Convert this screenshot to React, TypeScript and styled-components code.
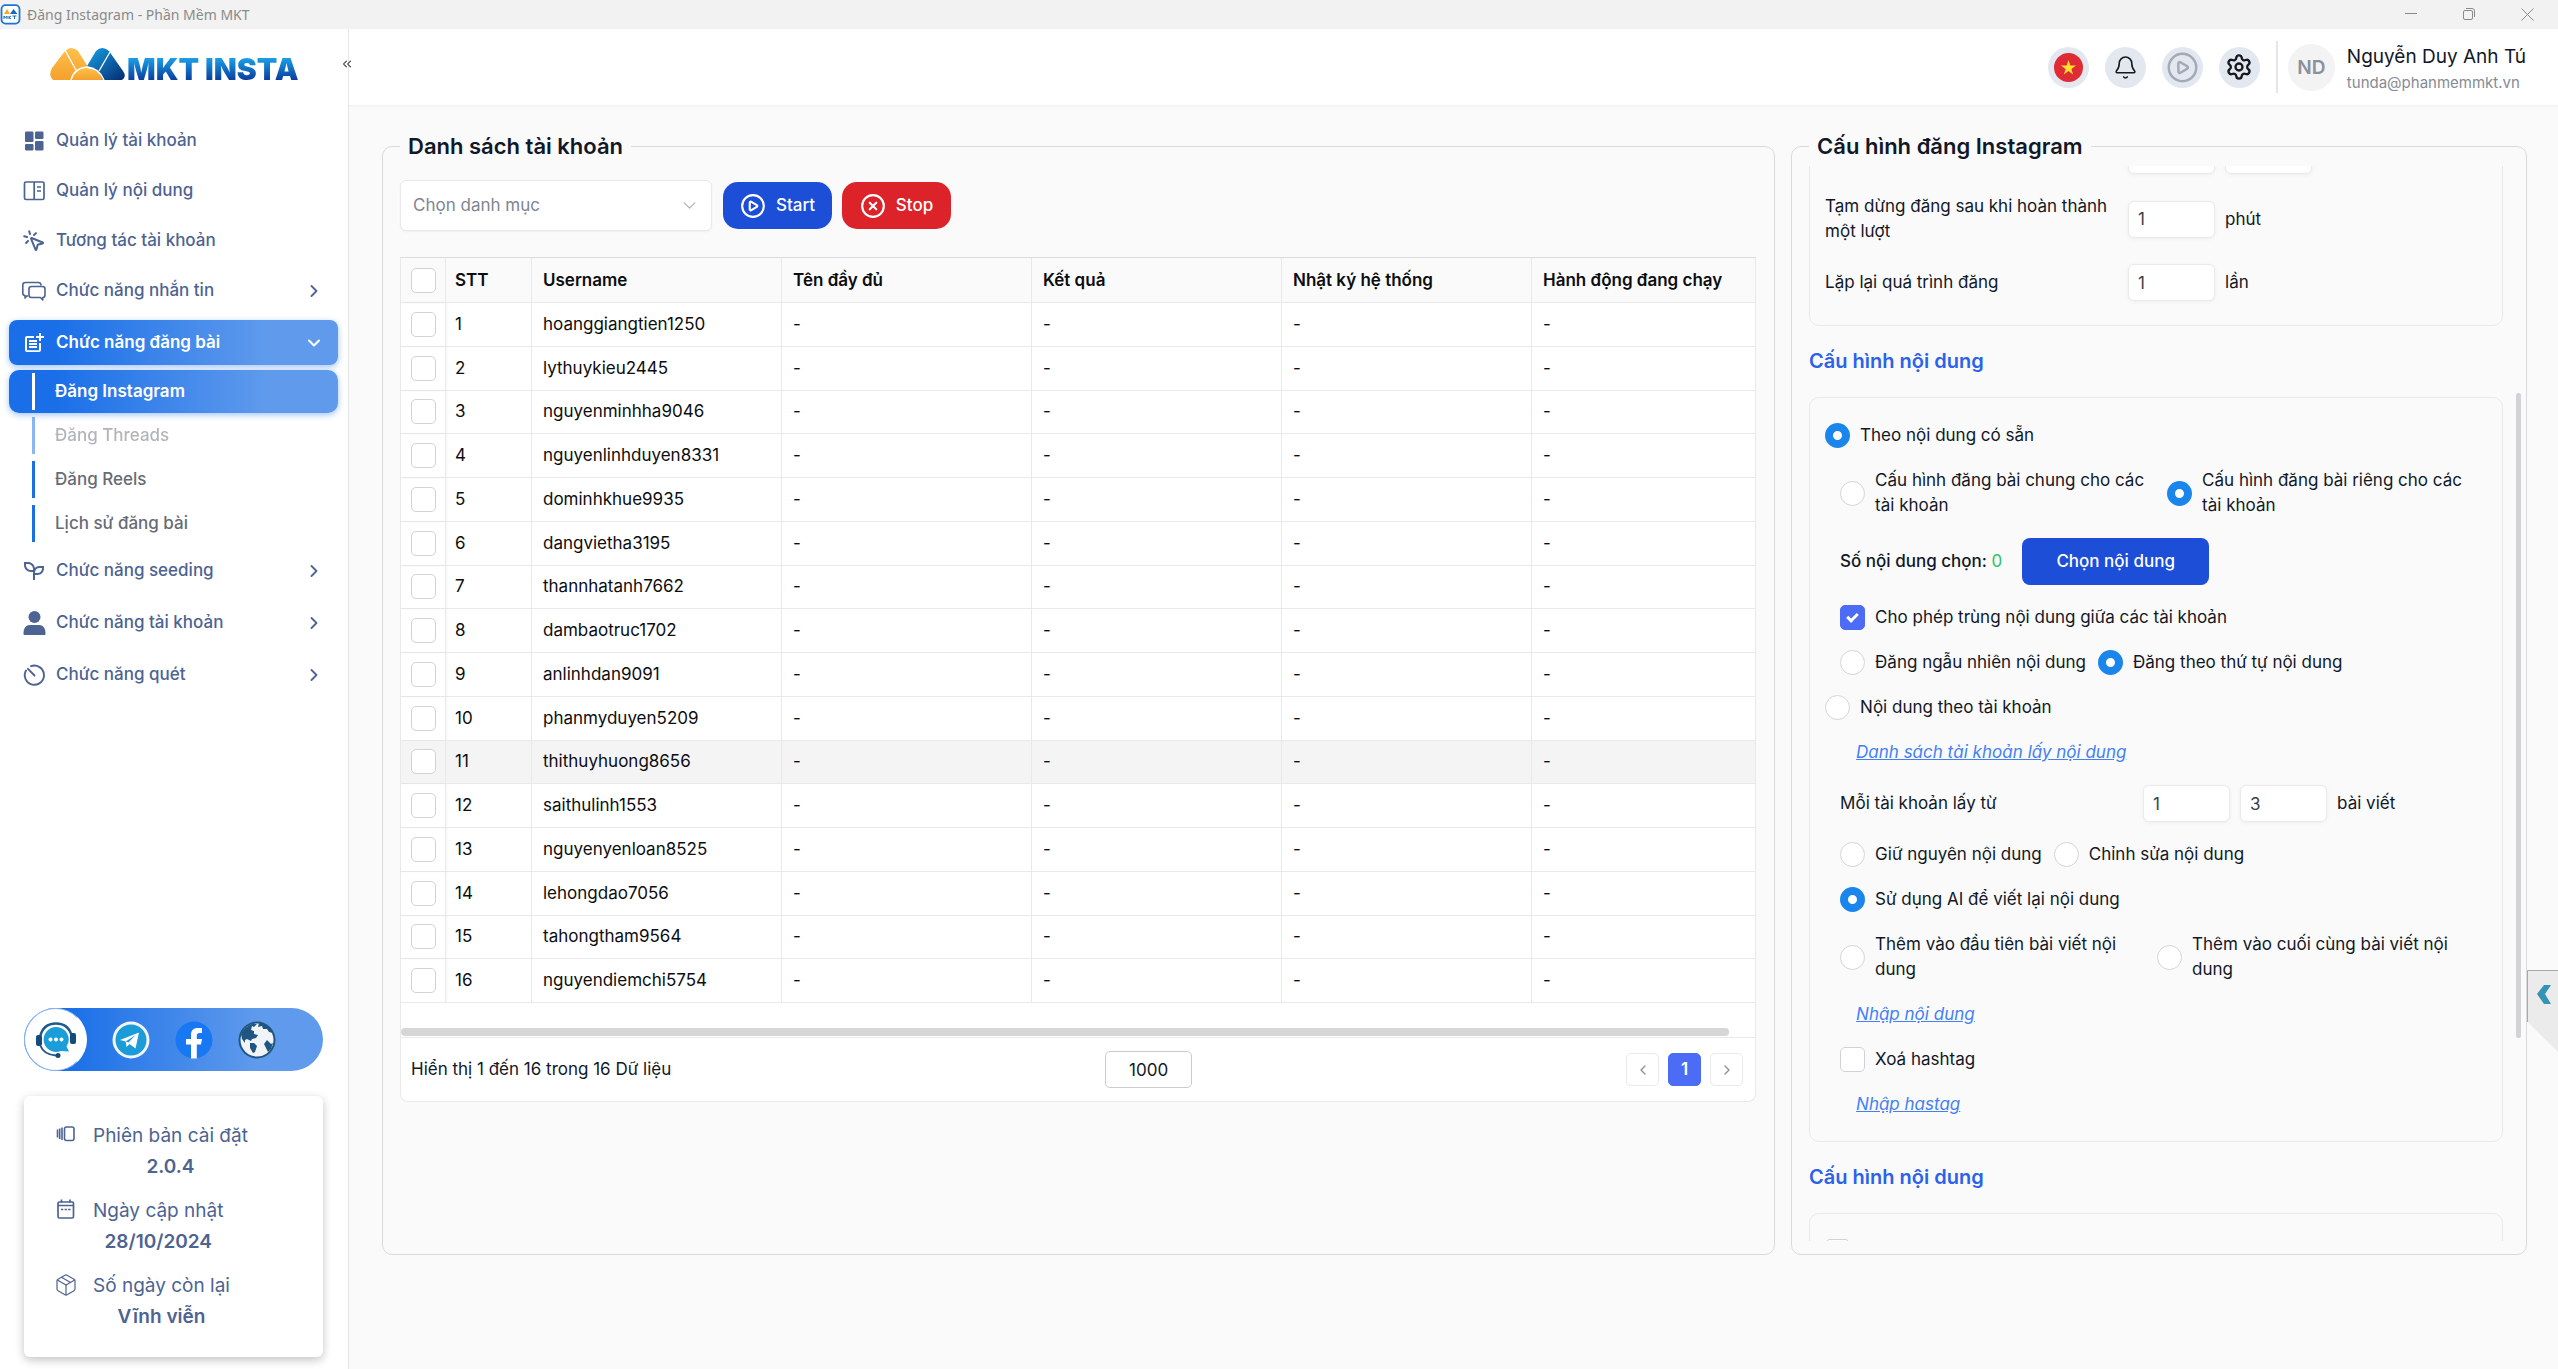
import React, { useLayoutEffect, useRef } from "react";
import styled, { createGlobalStyle, css } from "styled-components";
import {
  Bell,
  ChevronDown,
  ChevronLeft,
  ChevronRight,
  ChevronsLeft,
  CirclePlay,
  CircleX,
  MousePointerClick,
  Package,
  Settings,
} from "lucide-react";
import { MdOutlinePostAdd } from "react-icons/md";
import { RiSeedlingLine } from "react-icons/ri";

const line = "#d9dadc";
const softLine = "#e9e9ec";
const slate = "#4d6391";
const blueFade = "linear-gradient(90deg, #1a6fe8 0%, #1a6fe8 14%, #5f9aec 78%, #5f9aec 100%)";

const GlobalStyle = createGlobalStyle`
  *, *::before, *::after { box-sizing: border-box; }
  body {
    margin: 0;
    background: #fafafa;
    color: #111827;
    font: 400 17px/25px Inter, "Noto Sans", sans-serif;
  }
  button, input, select { font: inherit; color: inherit; }
  button { cursor: pointer; border: 0; padding: 0; background: none; }
`;

/* ---------- window frame ---------- */

const Window = styled.div`
  display: flex;
  flex-direction: column;
  height: 100vh;
  overflow: hidden;
`;

const TitleBar = styled.div`
  display: flex;
  align-items: center;
  flex: none;
  gap: 6px;
  height: 29px;
  padding-right: 19px;
  background: #f2f2f2;
  color: #8a8a8a;
  font: 400 14px/20px "Noto Sans", "Open Sans", sans-serif;
`;

const WindowButtons = styled.div`
  display: flex;
  gap: 34px;
  margin-left: auto;
  button {
    display: flex;
    width: 24px;
    justify-content: center;
  }
`;

const Body = styled.div`
  position: relative;
  display: flex;
  flex: 1;
  min-height: 0;
`;

/* ---------- sidebar ---------- */

const Sidebar = styled.aside`
  display: flex;
  flex-direction: column;
  flex: none;
  width: 349px;
  padding-bottom: 12px;
  background: #fff;
  border-right: 1px solid #e5e6e8;
`;

const Brand = styled.div`
  position: relative;
  display: flex;
  align-items: flex-end;
  gap: 2px;
  height: 89px;
  padding: 18px 0 37px 50px;
`;

const BrandName = styled.span`
  font: 900 30px/24px Inter, sans-serif;
  white-space: nowrap;
  background: linear-gradient(#1b9fe6 5%, #0b3f9f 95%);
  background-clip: text;
  color: transparent;
`;

const Collapse = styled.button`
  position: absolute;
  right: -6px;
  top: 28px;
  display: flex;
  color: #333;
`;

const NavList = styled.nav`
  display: flex;
  flex-direction: column;
  gap: 5px;
  padding: 0 10px 0 9px;
`;

const NavItem = styled.a<{ $active?: boolean; $group?: boolean }>`
  display: flex;
  align-items: center;
  gap: 10px;
  height: 45px;
  margin-bottom: ${(p) => (p.$group && !p.$active ? 2 : 0)}px;
  padding: 0 14px 0 13px;
  border-radius: 8px;
  color: ${slate};
  font-weight: 500;
  text-decoration: none;
  > svg:first-child {
    flex: none;
    width: 24px;
    height: 24px;
  }
  > svg + svg {
    margin-left: auto;
  }
  ${(p) =>
    p.$active &&
    css`
      background: ${blueFade};
      color: #fff;
      font-weight: 600;
      box-shadow: 0 2px 6px #1a6fe866;
    `}
`;

const SubList = styled.div`
  display: flex;
  flex-direction: column;
  gap: 1px;
  margin-bottom: -2px;
`;

const SubItem = styled.a<{ $active?: boolean; $muted?: boolean }>`
  display: flex;
  align-items: center;
  gap: 20px;
  height: 43px;
  padding-left: 23px;
  border-radius: 10px;
  color: #666b75;
  font-weight: 500;
  text-decoration: none;
  opacity: ${(p) => (p.$muted ? 0.5 : 1)};
  &::before {
    content: "";
    width: 3px;
    height: 37px;
    background: ${(p) => (p.$active ? "#fff" : "#1a6fe8")};
  }
  ${(p) =>
    p.$active &&
    css`
      background: ${blueFade};
      color: #fff;
      font-weight: 600;
      box-shadow: 0 2px 6px #1a6fe866;
    `}
`;

const Social = styled.div`
  display: flex;
  align-items: center;
  gap: 25px;
  height: 63px;
  margin: auto 25px 25px 24px;
  border-radius: 32px;
  background: ${blueFade};
  a {
    display: flex;
  }
  a:first-child {
    width: 63px;
    height: 63px;
    align-items: center;
    justify-content: center;
    border: 1px solid #8ab2f0;
    border-right-color: #fff;
    border-radius: 50%;
    background: #fff;
  }
`;

const VersionCard = styled.dl`
  display: flex;
  flex-direction: column;
  gap: 13px;
  height: 261px;
  margin: 0 25px 0 24px;
  padding: 24px 30px;
  border-radius: 6px;
  background: #fff;
  box-shadow: 0 3px 10px #0000003d;
  color: ${slate};
  font-size: 19px;
  line-height: 31px;
`;

const VersionRow = styled.div`
  display: grid;
  grid-template-columns: 24px max-content;
  column-gap: 15px;
  svg {
    width: 24px;
    height: 24px;
    margin-top: 3px;
  }
  dd {
    grid-column: 2;
    margin: 0;
    font-weight: 600;
    text-align: center;
  }
`;

/* ---------- header ---------- */

const Content = styled.div`
  display: flex;
  flex-direction: column;
  flex: 1;
  min-width: 0;
`;

const Header = styled.header`
  display: flex;
  align-items: center;
  justify-content: flex-end;
  flex: none;
  gap: 16px;
  height: 78px;
  padding-right: 32px;
  background: #fff;
  border-bottom: 2px solid #f4f4f5;
`;

const RoundButton = styled.button<{ $color?: string }>`
  display: flex;
  align-items: center;
  justify-content: center;
  width: 41px;
  height: 41px;
  border-radius: 50%;
  background: #e3e8f0;
  color: ${(p) => p.$color ?? "#16181d"};
`;

const Divider = styled.div`
  width: 2px;
  height: 52px;
  background: #e5e6e9;
`;

const Profile = styled.div`
  display: flex;
  align-items: center;
  gap: 12px;
  margin-left: -6px;
`;

const Avatar = styled.span`
  width: 47px;
  height: 47px;
  border-radius: 50%;
  background: #f3f3f4;
  color: #8a919b;
  font-size: 19px;
  font-weight: 600;
  line-height: 47px;
  text-align: center;
`;

const Identity = styled.div`
  display: grid;
  padding-top: 5px;
  line-height: 26px;
`;

const UserName = styled.span`
  font-size: 19px;
`;

const UserMail = styled.span`
  color: #858b95;
  font-size: 15px;
`;

/* ---------- panels ---------- */

const Main = styled.main`
  display: grid;
  grid-template-columns: minmax(0, 1893fr) minmax(0, 1000fr);
  grid-template-rows: minmax(0, 1fr);
  gap: 16px;
  flex: 1;
  min-height: 0;
  padding: 25px 31px 114px 33px;
`;

const Panel = styled.fieldset`
  display: flex;
  flex-direction: column;
  min-width: 0;
  min-height: 0;
  margin: 0;
  padding: 20px 18px 13px 17px;
  border: 1px solid ${line};
  border-radius: 10px;
`;

const PanelTitle = styled.legend`
  padding: 0 8px;
  font-size: 22px;
  font-weight: 600;
  line-height: 28px;
`;

const Toolbar = styled.div`
  display: flex;
  align-items: center;
  gap: 10px;
  margin-bottom: 26px;
`;

const SelectBox = styled.div`
  position: relative;
  width: 312px;
  margin-right: 1px;
  select {
    width: 100%;
    height: 51px;
    padding: 0 40px 0 12px;
    border: 1px solid #e8e9eb;
    border-radius: 6px;
    appearance: none;
    background: #fff;
    box-shadow: 0 1px 2px #0000000d;
    color: #808591;
  }
  svg {
    position: absolute;
    right: 12px;
    top: 15px;
    color: #b4b7bd;
    pointer-events: none;
  }
`;

const ActionButton = styled.button<{ $danger?: boolean }>`
  display: flex;
  align-items: center;
  justify-content: center;
  gap: 10px;
  width: 109px;
  height: 47px;
  border-radius: 15px;
  background: ${(p) => (p.$danger ? "#dc2329" : "#1c4ed8")};
  color: #fff;
  font-weight: 500;
`;

const TableCard = styled.div`
  border: 1px solid ${softLine};
  border-top-color: #dcdcde;
  border-radius: 0 0 8px 8px;
  background: #fff;
`;

const TableScroll = styled.div`
  overflow: hidden;
`;

const DataTable = styled.table`
  width: 1381px;
  height: 745px;
  table-layout: fixed;
  border-collapse: separate;
  border-spacing: 0;
  color: #0c0d10;
  th,
  td {
    padding: 0 0 0 11px;
    border-right: 1px solid ${softLine};
    border-bottom: 1px solid ${softLine};
    text-align: left;
    font-weight: 400;
  }
  th {
    height: 45px;
    background: #fafafa;
    font-weight: 600;
  }
  th:nth-child(2),
  td:nth-child(2) {
    padding-left: 9px;
  }
  th:first-child,
  td:first-child {
    padding-left: 10px;
    box-shadow: 1px 0 2px #0000000a;
  }
  tr[aria-selected="true"] td {
    background: #f4f4f5;
  }
  input {
    display: block;
  }
`;

const HorizontalTrack = styled.div`
  height: 35px;
  padding: 25px 26px 0 0;
  border-bottom: 1px solid ${softLine};
  &::before {
    content: "";
    display: block;
    height: 8px;
    border-radius: 4px;
    background: #d6d6d6;
  }
`;

const TableFooter = styled.div`
  display: flex;
  align-items: center;
  justify-content: space-between;
  height: 63px;
  padding: 0 12px 0 10px;
`;

const PageSize = styled.input`
  width: 87px;
  height: 37px;
  border: 1px solid #c9cbcf;
  border-radius: 5px;
  background: #fff;
  text-align: center;
`;

const Pager = styled.div`
  display: flex;
  gap: 9px;
`;

const PageButton = styled.button<{ $current?: boolean }>`
  display: flex;
  align-items: center;
  justify-content: center;
  width: 33px;
  height: 33px;
  border: 1px solid ${(p) => (p.$current ? "#4c6cf6" : softLine)};
  border-radius: 5px;
  background: ${(p) => (p.$current ? "#4c6cf6" : "#fff")};
  color: ${(p) => (p.$current ? "#fff" : "#8d9096")};
  font-weight: 600;
`;

/* ---------- form controls ---------- */

const Radio = styled.input.attrs({ type: "radio" })`
  flex: none;
  width: 25px;
  height: 25px;
  margin: 0;
  border: 1px solid #d3d5d9;
  border-radius: 50%;
  appearance: none;
  background: #fff;
  &:checked {
    border: 8px solid #1a86ec;
  }
`;

const Check = styled.input.attrs({ type: "checkbox" })`
  flex: none;
  width: 25px;
  height: 25px;
  margin: 0;
  border: 1px solid #d0d2d6;
  border-radius: 5px;
  appearance: none;
  background: #fff;
  &:checked {
    display: flex;
    justify-content: center;
    padding-top: 5px;
    border-color: #4c6cf6;
    background: #4c6cf6;
  }
  &:checked::after {
    content: "";
    width: 7px;
    height: 11px;
    border: solid #fff;
    border-width: 0 3px 3px 0;
    transform: rotate(45deg);
  }
`;

const Option = styled.label`
  display: flex;
  align-items: center;
  gap: 10px;
  span {
    max-width: 275px;
  }
`;

const ConfigPanel = styled(Panel)`
  flex-direction: row;
  gap: 13px;
  padding: 6px 5px 13px 17px;
`;

const ConfigScroll = styled.div`
  flex: 1;
  min-width: 0;
  height: 100%;
  overflow: hidden;
`;

const VerticalTrack = styled.div`
  width: 5px;
  height: 100%;
  padding-top: 227px;
  &::before {
    content: "";
    display: block;
    height: 645px;
    border-radius: 3px;
    background: #d3d3d5;
  }
`;

const ConfigCard = styled.div`
  display: flex;
  flex-direction: column;
  gap: 20px;
  padding: 25px 15px 24px;
  border: 1px solid ${softLine};
  border-radius: 10px;
`;

const ConfigTitle = styled.h2`
  margin: 23px 0;
  color: #2b62ea;
  font-size: 20px;
  font-weight: 600;
  line-height: 25px;
`;

const Indent = styled.div`
  display: flex;
  flex-direction: column;
  gap: 20px;
  padding-left: 15px;
`;

const OptionLine = styled.div`
  display: flex;
  align-items: center;
  gap: 12px;
`;

const OptionPair = styled.div<{ $first?: string }>`
  display: grid;
  grid-template-columns: ${(p) => p.$first ?? "317px"} 1fr;
  column-gap: 10px;
`;

const FieldRow = styled.div`
  display: flex;
  align-items: center;
  gap: 10px;
  > span:first-child,
  > label:first-child {
    flex: none;
    width: 293px;
  }
`;

const NumberBox = styled.input`
  width: 87px;
  height: 37px;
  padding: 0 9px;
  border: 1px solid #e9eaec;
  border-radius: 6px;
  background: #fff;
  box-shadow: 0 1px 4px #0000000d;
  color: #3c4048;
`;

const CountLine = styled.div`
  display: flex;
  align-items: center;
  gap: 20px;
  font-weight: 500;
  b {
    color: #2fc45f;
    font-weight: 400;
  }
  button {
    width: 187px;
    height: 47px;
    border-radius: 8px;
    background: #1c4ed8;
    color: #fff;
  }
`;

const TextLink = styled.a`
  align-self: flex-start;
  margin-left: 16px;
  color: #4380f5;
  font-style: italic;
  text-decoration: underline;
`;

const SideTab = styled.button`
  position: absolute;
  right: 0;
  top: 941px;
  display: flex;
`;

/* ---------- drawings ---------- */

const AppBadge = () => (
  <svg width="21" height="21" viewBox="0 0 21 21">
    <rect x="1.5" y="1.2" width="18" height="18.4" rx="4" fill="#fff" stroke="#1b74d8" strokeWidth="1.8" />
    <path d="M4 10l3-5 3 5z" fill="#f7a823" />
    <path d="M10 10l3.500-5 4 5z" fill="#1769c0" />
    <path d="M4 15v-3l1.500 2 1.500-2v3M9 12v3m0-1.500l2-1.500m-2 1.500l2 1.500M12.500 12h4M14.500 12v3" fill="none" stroke="#1769c0" strokeWidth="1" />
  </svg>
);

const BrandMark = () => (
  <svg width="75" height="34" viewBox="0 0 75 34">
    <defs>
      <linearGradient id="sun" x1="0" y1="0" x2="0" y2="1">
        <stop offset="0" stopColor="#fcc24c" />
        <stop offset="1" stopColor="#f5a02c" />
      </linearGradient>
      <linearGradient id="sea" x1="0" y1="0" x2="1" y2="1">
        <stop offset="0" stopColor="#17a3e8" />
        <stop offset="1" stopColor="#05296f" />
      </linearGradient>
    </defs>
    <path d="M3 33Q-2 29 2 21L15 4q6-6 13 0l10 16-12 13z" fill="url(#sun)" />
    <path d="M37 19L46 4q6-6 13 0l14 20q4 6-1 9H52q-3-9-15-14z" fill="url(#sea)" />
    <path d="M22 33q3-11 15-12 12 1 16 12z" fill="url(#sun)" />
    <path d="M15 3l12 22M60 5L49 24M21 33q3-12 16-13 12 1 17 13" fill="none" stroke="#fff" strokeWidth="1.3" />
  </svg>
);

const DashboardIcon = () => (
  <svg viewBox="0 0 24 24" fill="currentColor">
    <rect x="3" y="2.500" width="8.500" height="10.500" rx="1.200" />
    <rect x="13" y="2.500" width="8.500" height="7.500" rx="1.200" />
    <rect x="3" y="15" width="8.500" height="6.500" rx="1.200" />
    <rect x="13" y="12" width="8.500" height="9.500" rx="1.200" />
  </svg>
);

const BookIcon = () => (
  <svg viewBox="0 0 24 24" fill="none" stroke="currentColor" strokeWidth="1.700">
    <rect x="2.500" y="3" width="19.500" height="17.500" rx="1.500" />
    <path d="M12.200 3v17.500M15 8h4M15 12h4" />
  </svg>
);

const ChatIcon = () => (
  <svg viewBox="0 0 24 24" fill="none" stroke="currentColor" strokeWidth="1.600" strokeLinejoin="round">
    <path d="M6 17H4.500L3 19v-2.500Q.800 16.500.800 14V6Q.800 3.500 3.500 3.500h13q2.500 0 2.500 3" />
    <path d="M9.500 7.500h11q2.500 0 2.500 2.500v6q0 2.500-2.200 2.500V21l-2.300-2.500h-9q-2.500 0-2.500-2.500v-6q0-2.500 2.500-2.500z" />
  </svg>
);

const UserIcon = () => (
  <svg viewBox="0 0 24 24" fill="currentColor">
    <circle cx="12.500" cy="6" r="6" />
    <path d="M1.500 22.500Q1.500 14 8 14h9q6.500 0 6.500 8.500 0 2-2 2h-18q-2 0-2-2z" />
  </svg>
);

const TimerIcon = () => (
  <svg viewBox="0 0 24 24" fill="none" stroke="currentColor" strokeWidth="1.900" strokeLinecap="round">
    <path d="M9 3.200A9.600 9.600 0 1 1 4 7.500M6 5.800l6.500 6.700" />
  </svg>
);

const VersionIcon = () => (
  <svg viewBox="0 0 24 24" fill="none" stroke="currentColor" strokeWidth="1.600">
    <rect x="10.500" y="4" width="9.500" height="13.500" rx="2" />
    <path d="M8 4.500v12.500M5.700 5.500v10.500M3.500 6.500v8" />
  </svg>
);

const CalendarIcon = () => (
  <svg viewBox="0 0 24 24" fill="none" stroke="currentColor" strokeWidth="1.700">
    <rect x="4" y="4" width="15.500" height="16" rx="1.500" />
    <path d="M4 7.500h15.500M7.500 1.500v3M16 1.500v3" />
    <path d="M7 11.500h2.300M10.600 11.500h2.300M14.200 11.500h2.300" />
  </svg>
);

const SupportIcon = () => (
  <svg width="42" height="38" viewBox="0 0 42 38">
    <path d="M5 16Q8 2.500 21 2.500T37 16" fill="none" stroke="#22598c" strokeWidth="2.500" />
    <rect x="1" y="14" width="6" height="11" rx="2" fill="#174a7c" />
    <rect x="35" y="12" width="6" height="11" rx="2" fill="#174a7c" />
    <path d="M5 24q4 10 16 10.500" fill="none" stroke="#22598c" strokeWidth="2" />
    <circle cx="23" cy="34.500" r="2.500" fill="#174a7c" />
    <path d="M21 6a12.500 12.500 0 1 0 5 24l8 .500-2.500-5A12.500 12.500 0 0 0 21 6z" fill="#1b9dd9" />
    <g fill="#fff">
      <circle cx="15.500" cy="18.500" r="2" />
      <circle cx="21" cy="18.500" r="2" />
      <circle cx="26.500" cy="18.500" r="2" />
    </g>
  </svg>
);

const TelegramIcon = () => (
  <svg width="38" height="38" viewBox="0 0 38 38">
    <circle cx="19" cy="19" r="18.500" fill="#f3f5f7" />
    <circle cx="19" cy="19" r="15.500" fill="#1b9bd7" />
    <path d="M8 19l19-7.500-3.500 16-6-4.500-3 3-.800-5.500z" fill="#fff" />
    <path d="M13.700 20.500L23.500 14l-7 7.500z" fill="#1b9bd7" />
  </svg>
);

const FacebookIcon = () => (
  <svg width="38" height="38" viewBox="0 0 38 38">
    <circle cx="19" cy="19" r="18.500" fill="#1877f2" />
    <path d="M16 37.500V23.500h-5V18h5v-4.200C16 9.500 18.500 7 22.600 7H27v5h-2.500c-2 0-2.700 1.200-2.700 2.500V18H27l-1 5.500h-4.200v14z" fill="#fff" />
  </svg>
);

const GlobeIcon = () => (
  <svg width="38" height="38" viewBox="0 0 38 38">
    <circle cx="19" cy="19" r="18.500" fill="#1f5580" />
    <circle cx="19" cy="19" r="16.500" fill="#f1f4f7" />
    <path d="M3 13q3-7 11-10l5 0-3 3-2-1-1 4 3 1 0 3 4 1-2 3-4 1-1 2-4-2-2 1 0 3-3-4z" fill="#1f5580" />
    <path d="M21 2l8 2q4 3 6 8l-4-1-2-3-4 0-1-3-4 1z" fill="#1f5580" />
    <path d="M12 22l4 0 3 3-2 6-2 1-3-5z" fill="#1f5580" />
    <path d="M29 19l4 4 2-1-2 6-3 3-2-4-2-4z" fill="#1f5580" />
  </svg>
);

const FlagIcon = () => (
  <svg width="29" height="29" viewBox="0 0 29 29">
    <circle cx="14.500" cy="14.500" r="14.500" fill="#df2b33" />
    <path d="M14.500 7l1.800 5.500H22l-4.600 3.400 1.700 5.600-4.600-3.400-4.600 3.400 1.700-5.600L7 12.500h5.700z" fill="#ffe12e" />
  </svg>
);

/* ---------- data ---------- */

const usernames = [
  "hoanggiangtien1250",
  "lythuykieu2445",
  "nguyenminhha9046",
  "nguyenlinhduyen8331",
  "dominhkhue9935",
  "dangvietha3195",
  "thannhatanh7662",
  "dambaotruc1702",
  "anlinhdan9091",
  "phanmyduyen5209",
  "thithuyhuong8656",
  "saithulinh1553",
  "nguyenyenloan8525",
  "lehongdao7056",
  "tahongtham9564",
  "nguyendiemchi5754",
];

const columns = ["STT", "Username", "Tên đầy đủ", "Kết quả", "Nhật ký hệ thống", "Hành động đang chạy"];
const columnWidths = [45, 86, 250, 250, 250, 250, 250];

/* ---------- sections ---------- */

function NavGroup({ icon, text }: { icon: React.ReactNode; text: string }) {
  return (
    <NavItem href="#" $group>
      {icon}
      {text}
      <ChevronRight size={20} strokeWidth={2.2} />
    </NavItem>
  );
}

function SideMenu() {
  return (
    <Sidebar>
      <Brand>
        <BrandMark />
        <BrandName>MKT INSTA</BrandName>
        <Collapse aria-label="Thu gọn">
          <ChevronsLeft size={14} strokeWidth={1.8} />
        </Collapse>
      </Brand>
      <NavList>
        <NavItem href="#"><DashboardIcon />Quản lý tài khoản</NavItem>
        <NavItem href="#"><BookIcon />Quản lý nội dung</NavItem>
        <NavItem href="#"><MousePointerClick />Tương tác tài khoản</NavItem>
        <NavGroup icon={<ChatIcon />} text="Chức năng nhắn tin" />
        <NavItem href="#" $group $active>
          <MdOutlinePostAdd />Chức năng đăng bài<ChevronDown size={20} strokeWidth={2.5} />
        </NavItem>
        <SubList>
          <SubItem href="#" $active>Đăng Instagram</SubItem>
          <SubItem href="#" $muted>Đăng Threads</SubItem>
          <SubItem href="#">Đăng Reels</SubItem>
          <SubItem href="#">Lịch sử đăng bài</SubItem>
        </SubList>
        <NavGroup icon={<RiSeedlingLine />} text="Chức năng seeding" />
        <NavGroup icon={<UserIcon />} text="Chức năng tài khoản" />
        <NavGroup icon={<TimerIcon />} text="Chức năng quét" />
      </NavList>
      <Social>
        <a href="#" aria-label="Hỗ trợ"><SupportIcon /></a>
        <a href="#" aria-label="Telegram"><TelegramIcon /></a>
        <a href="#" aria-label="Facebook"><FacebookIcon /></a>
        <a href="#" aria-label="Website"><GlobeIcon /></a>
      </Social>
      <VersionCard>
        <VersionRow><VersionIcon /><dt>Phiên bản cài đặt</dt><dd>2.0.4</dd></VersionRow>
        <VersionRow><CalendarIcon /><dt>Ngày cập nhật</dt><dd>28/10/2024</dd></VersionRow>
        <VersionRow><Package strokeWidth={1.2} /><dt>Số ngày còn lại</dt><dd>Vĩnh viễn</dd></VersionRow>
      </VersionCard>
    </Sidebar>
  );
}

function AccountPanel() {
  return (
    <Panel>
      <PanelTitle>Danh sách tài khoản</PanelTitle>
      <Toolbar>
        <SelectBox>
          <select aria-label="Chọn danh mục" defaultValue="">
            <option value="">Chọn danh mục</option>
          </select>
          <ChevronDown size={21} strokeWidth={1.6} />
        </SelectBox>
        <ActionButton><CirclePlay size={26} strokeWidth={2} />Start</ActionButton>
        <ActionButton $danger><CircleX size={26} strokeWidth={2} />Stop</ActionButton>
      </Toolbar>
      <TableCard>
        <TableScroll>
          <DataTable>
            <colgroup>
              {columnWidths.map((w, i) => (
                <col key={i} width={w} />
              ))}
            </colgroup>
            <thead>
              <tr>
                <th><Check aria-label="Chọn tất cả" /></th>
                {columns.map((c) => (
                  <th key={c}>{c}</th>
                ))}
              </tr>
            </thead>
            <tbody>
              {usernames.map((name, i) => (
                <tr key={name} aria-selected={i === 10}>
                  <td><Check aria-label={name} /></td>
                  <td>{i + 1}</td>
                  <td>{name}</td>
                  <td>-</td>
                  <td>-</td>
                  <td>-</td>
                  <td>-</td>
                </tr>
              ))}
            </tbody>
          </DataTable>
        </TableScroll>
        <HorizontalTrack />
        <TableFooter>
          <span>Hiển thị 1 đến 16 trong 16 Dữ liệu</span>
          <PageSize aria-label="Số dòng" defaultValue="1000" />
          <Pager>
            <PageButton aria-label="Trang trước"><ChevronLeft size={16} /></PageButton>
            <PageButton $current>1</PageButton>
            <PageButton aria-label="Trang sau"><ChevronRight size={16} /></PageButton>
          </Pager>
        </TableFooter>
      </TableCard>
    </Panel>
  );
}

function Choice({ group, text, on }: { group: string; text: string; on?: boolean }) {
  return (
    <Option>
      <Radio name={group} defaultChecked={on} />
      <span>{text}</span>
    </Option>
  );
}

const initialScroll = 55;

function SettingsPanel() {
  const scroller = useRef<HTMLDivElement>(null);
  useLayoutEffect(() => {
    if (scroller.current) scroller.current.scrollTop = initialScroll;
  }, []);
  return (
    <ConfigPanel>
      <PanelTitle>Cấu hình đăng Instagram</PanelTitle>
      <ConfigScroll ref={scroller}>
        <ConfigCard>
          <FieldRow>
            <span />
            <NumberBox aria-label="Từ" />
            <NumberBox aria-label="Đến" />
          </FieldRow>
          <FieldRow>
            <label htmlFor="pause">Tạm dừng đăng sau khi hoàn thành một lượt</label>
            <NumberBox id="pause" defaultValue="1" />
            <span>phút</span>
          </FieldRow>
          <FieldRow>
            <label htmlFor="repeat">Lặp lại quá trình đăng</label>
            <NumberBox id="repeat" defaultValue="1" />
            <span>lần</span>
          </FieldRow>
        </ConfigCard>
        <ConfigTitle>Cấu hình nội dung</ConfigTitle>
        <ConfigCard>
          <Choice group="source" text="Theo nội dung có sẵn" on />
          <Indent>
            <OptionPair>
              <Choice group="scope" text="Cấu hình đăng bài chung cho các tài khoản" />
              <Choice group="scope" text="Cấu hình đăng bài riêng cho các tài khoản" on />
            </OptionPair>
            <CountLine>
              <span>Số nội dung chọn: <b>0</b></span>
              <button>Chọn nội dung</button>
            </CountLine>
            <Option>
              <Check defaultChecked />
              Cho phép trùng nội dung giữa các tài khoản
            </Option>
            <OptionLine>
              <Choice group="order" text="Đăng ngẫu nhiên nội dung" />
              <Choice group="order" text="Đăng theo thứ tự nội dung" on />
            </OptionLine>
          </Indent>
          <Choice group="source" text="Nội dung theo tài khoản" />
          <Indent>
            <TextLink href="#">Danh sách tài khoản lấy nội dung</TextLink>
            <FieldRow>
              <label htmlFor="from">Mỗi tài khoản lấy từ</label>
              <NumberBox id="from" defaultValue="1" />
              <NumberBox aria-label="Đến" defaultValue="3" />
              <span>bài viết</span>
            </FieldRow>
            <OptionLine>
              <Choice group="edit" text="Giữ nguyên nội dung" />
              <Choice group="edit" text="Chỉnh sửa nội dung" />
            </OptionLine>
            <Choice group="rewrite" text="Sử dụng AI để viết lại nội dung" on />
            <OptionPair $first="307px">
              <Choice group="place" text="Thêm vào đầu tiên bài viết nội dung" />
              <Choice group="place" text="Thêm vào cuối cùng bài viết nội dung" />
            </OptionPair>
            <TextLink href="#">Nhập nội dung</TextLink>
            <Option><Check />Xoá hashtag</Option>
            <TextLink href="#">Nhập hastag</TextLink>
          </Indent>
        </ConfigCard>
        <ConfigTitle>Cấu hình nội dung</ConfigTitle>
        <ConfigCard>
          <Check aria-label="Tùy chọn nội dung" />
          <NumberBox aria-label="Số lượng" />
        </ConfigCard>
      </ConfigScroll>
      <VerticalTrack />
    </ConfigPanel>
  );
}

export default function App() {
  return (
    <Window>
      <GlobalStyle />
      <TitleBar>
        <AppBadge />
        Đăng Instagram - Phần Mềm MKT
        <WindowButtons>
          <button aria-label="Thu nhỏ">
            <svg width="12" height="12" viewBox="0 0 12 12" stroke="#8a8a8a"><path d="M0 5.500h12" /></svg>
          </button>
          <button aria-label="Khôi phục">
            <svg width="12" height="12" viewBox="0 0 12 12" fill="none" stroke="#8a8a8a">
              <rect x=".5" y="2.500" width="9" height="9" rx="1.500" />
              <path d="M3 .500h6q2.500 0 2.500 2.500v6" />
            </svg>
          </button>
          <button aria-label="Đóng">
            <svg width="13" height="13" viewBox="0 0 13 13" stroke="#8a8a8a"><path d="M.5.500l12 12M12.500.500l-12 12" /></svg>
          </button>
        </WindowButtons>
      </TitleBar>
      <Body>
        <SideMenu />
        <Content>
          <Header>
            <RoundButton aria-label="Ngôn ngữ"><FlagIcon /></RoundButton>
            <RoundButton aria-label="Thông báo"><Bell size={25} strokeWidth={1.5} /></RoundButton>
            <RoundButton aria-label="Hướng dẫn" $color="#a3aab6"><CirclePlay size={33} strokeWidth={1.8} /></RoundButton>
            <RoundButton aria-label="Cài đặt"><Settings size={28} strokeWidth={2} /></RoundButton>
            <Divider />
            <Profile>
              <Avatar>ND</Avatar>
              <Identity>
                <UserName>Nguyễn Duy Anh Tú</UserName>
                <UserMail>tunda@phanmemmkt.vn</UserMail>
              </Identity>
            </Profile>
          </Header>
          <Main>
            <AccountPanel />
            <SettingsPanel />
          </Main>
        </Content>
        <SideTab aria-label="Mở bảng">
          <svg width="31" height="82" viewBox="0 0 31 82">
            <path d="M.5 0H31v82L.500 52z" fill="#ebebec" />
            <path d="M.5 52V.500H31" fill="none" stroke="#a9a9ab" />
            <path d="M17 15h7l-6 9 6 10h-7l-7-10z" fill="#3593b5" />
          </svg>
        </SideTab>
      </Body>
    </Window>
  );
}
